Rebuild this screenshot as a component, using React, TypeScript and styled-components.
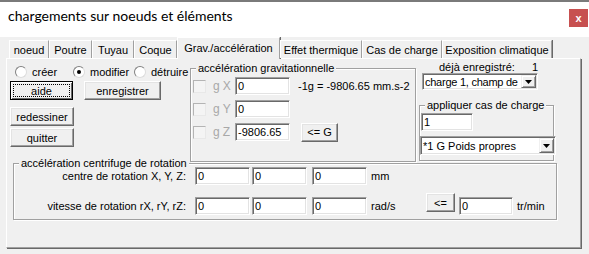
import styled, { createGlobalStyle } from "styled-components";

const GlobalStyle = createGlobalStyle`
  html, body { margin: 0; padding: 0; background: #f0f0f0; }
  body {
    font-family: "Liberation Sans", Arial, sans-serif;
    font-size: 11px;
    color: #000;
  }
`;

const TABS = [
  { label: "noeud", w: 40 },
  { label: "Poutre", w: 43 },
  { label: "Tuyau", w: 42 },
  { label: "Coque", w: 43 },
  { label: "Grav./accélération", w: 103, active: true },
  { label: "Effet thermique", w: 82 },
  { label: "Cas de charge", w: 80 },
  { label: "Exposition climatique", w: 110 },
];

const GRAV_ROWS = [
  { axis: "gX", value: "0", note: "-1g = -9806.65 mm.s-2" },
  { axis: "gY", value: "0" },
  { axis: "gZ", value: "-9806.65", button: "<= G" },
];

const Arrow = () => (
  <svg width="7" height="4" viewBox="0 0 7 4">
    <path d="M0 0h7L3.5 4z" fill="#000" />
  </svg>
);

export default function App() {
  return (
    <>
      <GlobalStyle />
      <Window>
        <TitleBar>
          <Title>chargements sur noeuds et éléments</Title>
          <CloseButton>x</CloseButton>
        </TitleBar>

        <Body>
          <TabStrip>
            {TABS.map((t) => (
              <Tab key={t.label} $w={t.w} $active={t.active}>
                {t.label}
              </Tab>
            ))}
          </TabStrip>

          <Panel>
            <TopSection>
              <LeftCol>
                <RadioRow>
                  <RadioOption $w={58}>
                    <RadioCircle />
                    créer
                  </RadioOption>
                  <RadioOption $w={61}>
                    <RadioCircle $checked />
                    modifier
                  </RadioOption>
                  <RadioOption>
                    <RadioCircle />
                    détruire
                  </RadioOption>
                </RadioRow>
                <ButtonRow>
                  <Button $w={63} $default>
                    <FocusRing>aide</FocusRing>
                  </Button>
                  <Button $w={77}>enregistrer</Button>
                </ButtonRow>
                <Button $w={64} $mt={7}>redessiner</Button>
                <Button $w={64} $mt={2}>quitter</Button>
              </LeftCol>

              <GroupBox $w={226} $h={94} $mt={9}>
                <Legend>accélération gravitationnelle</Legend>
                <GravRows>
                  {GRAV_ROWS.map((r) => (
                    <GravRow key={r.axis}>
                      <CheckBox />
                      <AxisLabel>{r.axis}</AxisLabel>
                      <Field $w={55} defaultValue={r.value} />
                      {r.note && <Note>{r.note}</Note>}
                      {r.button && (
                        <Button $w={37} $ml={11}>
                          {r.button}
                        </Button>
                      )}
                    </GravRow>
                  ))}
                </GravRows>
              </GroupBox>

              <RightCol>
                <SavedRow>
                  <SavedLabel>déjà enregistré:</SavedLabel>
                  <span>1</span>
                </SavedRow>
                <Combo $w={116} $h={17} $ml={3}>
                  <ComboText $tight>charge 1, champ de</ComboText>
                  <ComboArrow>
                    <Arrow />
                  </ComboArrow>
                </Combo>
                <GroupBox $w={135} $h={56} $mt={15}>
                  <Legend>appliquer cas de charge</Legend>
                  <CaseStack>
                    <Field $w={52} defaultValue="1" style={{ marginLeft: 1 }} />
                    <Combo $w={136} $h={19}>
                      <ComboText>*1 G Poids propres</ComboText>
                      <ComboArrow>
                        <Arrow />
                      </ComboArrow>
                    </Combo>
                  </CaseStack>
                </GroupBox>
              </RightCol>
            </TopSection>

            <GroupBox $w={544} $h={57} $ml={3}>
              <Legend>accélération centrifuge de rotation</Legend>
              <RotRow>
                <RotLabel>centre de rotation X, Y, Z:</RotLabel>
                <Field $w={55} defaultValue="0" />
                <Field $w={55} defaultValue="0" style={{ marginLeft: 2 }} />
                <Field $w={55} defaultValue="0" style={{ marginLeft: 5 }} />
                <Unit>mm</Unit>
              </RotRow>
              <RotRow $second>
                <RotLabel>vitesse de rotation rX, rY, rZ:</RotLabel>
                <Field $w={55} defaultValue="0" />
                <Field $w={55} defaultValue="0" style={{ marginLeft: 2 }} />
                <Field $w={55} defaultValue="0" style={{ marginLeft: 5 }} />
                <Unit $w={55}>rad/s</Unit>
                <Button $w={29} $top>
                  {"<="}
                </Button>
                <Field $w={54} defaultValue="0" style={{ marginLeft: 4 }} />
                <Unit>tr/min</Unit>
              </RotRow>
            </GroupBox>
          </Panel>
        </Body>
      </Window>
    </>
  );
}

const Window = styled.div`
  width: 589px;
  height: 254px;
  display: flex;
  flex-direction: column;
  overflow: hidden;
`;

const TitleBar = styled.div`
  height: 35px;
  flex-shrink: 0;
  background: #fff;
  border-top: 2px solid #7a7a7a;
  display: flex;
  align-items: flex-start;
  justify-content: space-between;
`;

const Title = styled.div`
  margin: 5px 0 0 8px;
  font-family: "Lato", "Liberation Sans", sans-serif;
  font-size: 14px;
  line-height: 18px;
  color: #000;
`;

const CloseButton = styled.div`
  width: 19px;
  height: 18px;
  margin: 7px 1px 0 0;
  background: #c75050;
  color: #fff;
  font-weight: bold;
  font-size: 11px;
  line-height: 16px;
  display: flex;
  align-items: center;
  justify-content: center;
`;

const Body = styled.div`
  flex: 1;
  background: #f0f0f0;
  padding-left: 6px;
`;

const TabStrip = styled.div`
  height: 21px;
  padding-left: 3px;
  display: flex;
  align-items: flex-end;
  position: relative;
  z-index: 2;
`;

const Tab = styled.div<{ $w: number; $active?: boolean }>`
  width: ${(p) => p.$w}px;
  height: ${(p) => (p.$active ? 22 : 18)}px;
  margin-bottom: ${(p) => (p.$active ? -1 : 0)}px;
  padding-bottom: ${(p) => (p.$active ? 2 : 0)}px;
  box-sizing: border-box;
  background: #f0f0f0;
  border-top: 1px solid #fff;
  border-left: 1px solid #fff;
  border-right: 1px solid #a0a0a0;
  box-shadow: 1px 0 0 #696969;
  display: flex;
  align-items: center;
  justify-content: center;
  white-space: nowrap;
  font-size: 11px;
`;

const Panel = styled.div`
  width: 575px;
  height: 190px;
  box-sizing: border-box;
  border-top: 1px solid #fff;
  border-left: 1px solid #fff;
  border-right: 1px solid #a0a0a0;
  border-bottom: 1px solid #a0a0a0;
  box-shadow: 1px 1px 0 #696969;
  padding-left: 3px;
  position: relative;
  z-index: 1;
`;

const TopSection = styled.div`
  height: 104px;
  display: flex;
  align-items: flex-start;
`;

const LeftCol = styled.div`
  width: 180px;
  display: flex;
  flex-direction: column;
  align-items: flex-start;
`;

const RadioRow = styled.div`
  margin-top: 6px;
  height: 13px;
  padding-left: 5px;
  display: flex;
  align-items: center;
`;

const RadioOption = styled.label<{ $w?: number }>`
  ${(p) => (p.$w ? `width: ${p.$w}px;` : "")}
  display: flex;
  align-items: center;
  gap: 5px;
  white-space: nowrap;
`;

const RadioCircle = styled.span<{ $checked?: boolean }>`
  width: 12px;
  height: 12px;
  box-sizing: border-box;
  border-radius: 50%;
  border: 1px solid;
  border-color: #808080 #dcdcdc #dcdcdc #808080;
  background: #fff;
  display: flex;
  align-items: center;
  justify-content: center;

  &::after {
    content: "";
    width: 4px;
    height: 4px;
    border-radius: 50%;
    background: ${(p) => (p.$checked ? "#000" : "transparent")};
  }
`;

const ButtonRow = styled.div`
  margin-top: 3px;
  display: flex;
  gap: 11px;
`;

const Button = styled.button<{
  $w: number;
  $default?: boolean;
  $mt?: number;
  $ml?: number;
  $top?: boolean;
}>`
  width: ${(p) => p.$w}px;
  height: 19px;
  box-sizing: border-box;
  margin: ${(p) => p.$mt ?? 0}px 0 0 ${(p) => p.$ml ?? 0}px;
  padding: ${(p) => (p.$default ? "2px" : "0")};
  flex-shrink: 0;
  ${(p) => (p.$top ? "align-self: flex-start;" : "")}
  font: inherit;
  color: #000;
  background: #f0f0f0;
  display: flex;
  align-items: center;
  justify-content: center;
  border: 1px solid;
  border-color: ${(p) => (p.$default ? "#000" : "#fff #696969 #696969 #fff")};
  box-shadow: ${(p) =>
    p.$default
      ? "inset 1px 1px 0 #fff, inset -1px -1px 0 #696969"
      : "inset -1px -1px 0 #a0a0a0, inset 1px 1px 0 #e3e3e3"};
`;

const FocusRing = styled.span`
  flex: 1;
  align-self: stretch;
  border: 1px dotted #000;
  display: flex;
  align-items: center;
  justify-content: center;
`;

const GroupBox = styled.div<{ $w: number; $h: number; $mt?: number; $ml?: number }>`
  position: relative;
  flex-shrink: 0;
  width: ${(p) => p.$w}px;
  height: ${(p) => p.$h}px;
  margin: ${(p) => p.$mt ?? 0}px 0 0 ${(p) => p.$ml ?? 0}px;
  box-sizing: border-box;
  border: 1px solid #a0a0a0;
  box-shadow: inset 1px 1px 0 #fff, 1px 1px 0 #fff;
`;

const Legend = styled.span`
  position: absolute;
  top: -7px;
  left: 5px;
  padding: 0 2px;
  line-height: 13px;
  background: #f0f0f0;
  white-space: nowrap;
`;

const GravRows = styled.div`
  padding: 8px 0 0 2px;
  display: flex;
  flex-direction: column;
  gap: 5px;
`;

const GravRow = styled.div`
  height: 18px;
  display: flex;
  align-items: center;
`;

const CheckBox = styled.span`
  width: 13px;
  height: 13px;
  box-sizing: border-box;
  border: 1px solid;
  border-color: #b4b4b4 #e8e8e8 #e8e8e8 #b4b4b4;
  background: #f4f4f4;
  flex-shrink: 0;
`;

const AxisLabel = styled.span`
  width: 22px;
  margin-left: 7px;
  color: #a8a8a8;
  letter-spacing: 3px;
  font-size: 12px;
`;

const Field = styled.input<{ $w: number }>`
  width: ${(p) => p.$w}px;
  height: 18px;
  flex-shrink: 0;
  box-sizing: border-box;
  margin: 0;
  padding: 0 2px;
  font: inherit;
  color: #000;
  background: #fff;
  border: 1px solid;
  border-color: #a0a0a0 #fff #fff #a0a0a0;
  box-shadow: inset 1px 1px 0 #696969, inset -1px -1px 0 #e3e3e3;
  outline: none;
`;

const Note = styled.span`
  margin-left: 8px;
  white-space: nowrap;
`;

const RightCol = styled.div`
  margin-left: 3px;
  display: flex;
  flex-direction: column;
  align-items: flex-start;
`;

const SavedRow = styled.div`
  margin-top: 2px;
  padding-left: 20px;
  height: 12px;
  line-height: 12px;
  display: flex;
`;

const SavedLabel = styled.span`
  width: 93px;
`;

const Combo = styled.div<{ $w: number; $h: number; $ml?: number }>`
  width: ${(p) => p.$w}px;
  height: ${(p) => p.$h}px;
  margin-left: ${(p) => p.$ml ?? 0}px;
  flex-shrink: 0;
  box-sizing: border-box;
  padding: 1px;
  background: #fff;
  border: 1px solid;
  border-color: #a0a0a0 #fff #fff #a0a0a0;
  box-shadow: inset 1px 1px 0 #696969, inset -1px -1px 0 #e3e3e3;
  display: flex;
  align-items: stretch;
`;

const ComboText = styled.span<{ $tight?: boolean }>`
  flex: 1;
  min-width: 0;
  padding-left: 1px;
  white-space: nowrap;
  overflow: hidden;
  letter-spacing: ${(p) => (p.$tight ? "-0.25px" : "0")};
  display: flex;
  align-items: center;
`;

const ComboArrow = styled.span`
  width: 15px;
  flex-shrink: 0;
  box-sizing: border-box;
  background: #f0f0f0;
  border: 1px solid;
  border-color: #f0f0f0 #696969 #696969 #f0f0f0;
  box-shadow: inset 1px 1px 0 #fff, inset -1px -1px 0 #a0a0a0;
  display: flex;
  align-items: center;
  justify-content: center;
`;

const CaseStack = styled.div`
  padding-top: 7px;
  display: flex;
  flex-direction: column;
  align-items: flex-start;
  gap: 5px;
`;

const RotRow = styled.div<{ $second?: boolean }>`
  height: ${(p) => (p.$second ? 22 : 18)}px;
  margin-top: ${(p) => (p.$second ? 8 : 3)}px;
  display: flex;
  align-items: flex-end;
`;

const RotLabel = styled.span`
  width: 172px;
  margin-right: 9px;
  line-height: 18px;
  text-align: right;
  white-space: nowrap;
`;

const Unit = styled.span<{ $w?: number }>`
  margin-left: 4px;
  ${(p) => (p.$w ? `width: ${p.$w}px;` : "")}
  line-height: 18px;
  white-space: nowrap;
`;
